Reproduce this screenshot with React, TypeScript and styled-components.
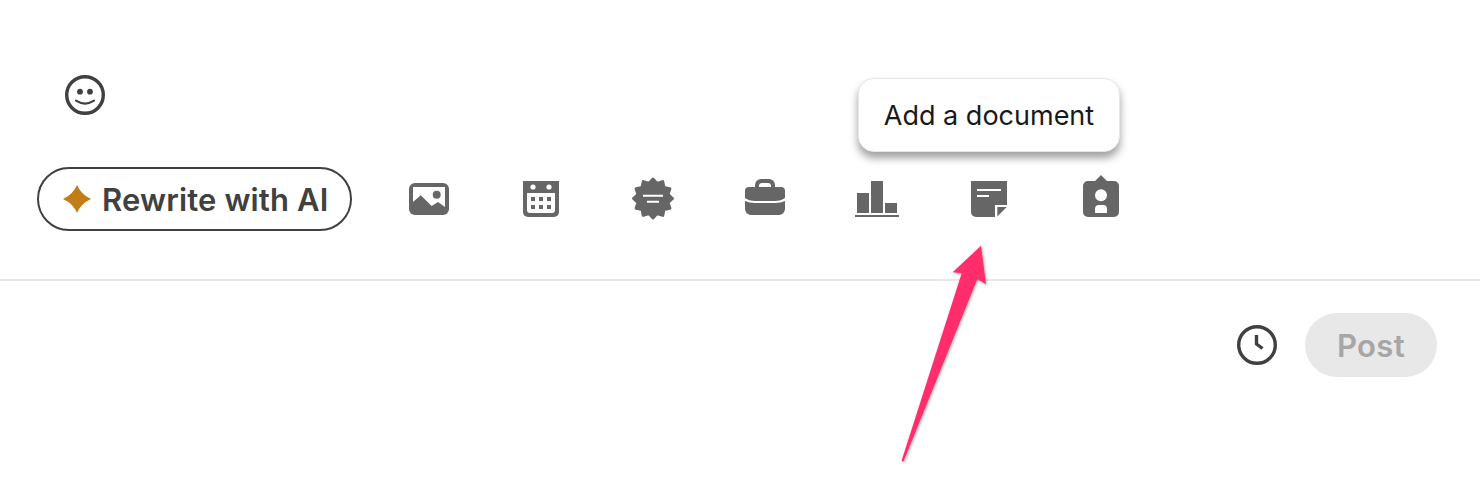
import React from 'react';
import styled, { createGlobalStyle } from 'styled-components';

const GlobalStyle = createGlobalStyle`
  html, body {
    margin: 0;
    background: #fff;
  }
  body {
    font-family: Inter, "Liberation Sans", sans-serif;
  }
`;

const Page = styled.div`
  position: relative;
  width: 1480px;
  height: 504px;
  padding-top: 75px;
  box-sizing: border-box;
  overflow: hidden;
`;

const EmojiRow = styled.div`
  display: flex;
  padding-left: 65px;
  color: #404040;
`;

const Toolbar = styled.div`
  display: flex;
  align-items: center;
  margin-top: 52px;
  padding-left: 37px;
`;

const RewriteButton = styled.button`
  display: flex;
  align-items: center;
  gap: 11px;
  width: 315px;
  height: 64px;
  margin-right: 21px;
  padding: 0 0 0 24px;
  box-sizing: border-box;
  border: 2px solid #404040;
  border-radius: 32px;
  background: #fff;
  color: #404040;
  font-family: inherit;
  font-size: 31px;
  font-weight: 600;
  letter-spacing: 0.15px;
  white-space: nowrap;
`;

const ToolSlot = styled.div`
  position: relative;
  display: flex;
  justify-content: center;
  align-items: center;
  width: 112px;
  height: 64px;
`;

const ToolIcon = styled.svg`
  display: block;
  width: 44px;
  height: 44px;
  overflow: visible;
  color: #666;
`;

const Tooltip = styled.div`
  position: absolute;
  left: 50%;
  bottom: 79px;
  transform: translateX(-50%);
  width: 262px;
  height: 74px;
  box-sizing: border-box;
  display: flex;
  justify-content: center;
  align-items: center;
  border: 1.5px solid #e8e8e8;
  border-radius: 16px;
  background: #fff;
  box-shadow: 0 6px 9px rgba(0, 0, 0, 0.38);
  color: #191919;
  font-size: 27px;
  white-space: nowrap;
`;

const Divider = styled.div`
  height: 2px;
  margin-top: 48px;
  background: #e8e8e8;
`;

const Footer = styled.div`
  display: flex;
  justify-content: flex-end;
  align-items: center;
  gap: 28px;
  margin-top: 32px;
  padding-right: 43px;
  color: #404040;
`;

const PostButton = styled.button`
  width: 132px;
  height: 64px;
  padding: 0;
  border: none;
  border-radius: 32px;
  background: #e8e8e8;
  color: #a6a6a6;
  font-family: inherit;
  font-size: 31px;
  font-weight: 600;
  letter-spacing: 0.4px;
`;

const Arrow = styled.svg`
  position: absolute;
  left: 890px;
  top: 230px;
  width: 110px;
  height: 240px;
  overflow: visible;
  filter: drop-shadow(1px 1px 1.5px rgba(0, 0, 0, 0.35));
`;

const badgePoints = Array.from({ length: 24 }, (_, i) => {
  const angle = (i * Math.PI) / 12 - Math.PI / 2;
  const radius = i % 2 === 0 ? 19.5 : 15.5;
  return `${(22 + radius * Math.cos(angle)).toFixed(2)},${(21.5 + radius * Math.sin(angle)).toFixed(2)}`;
}).join(' ');

const SmileIcon = () => (
  <svg width="40" height="40" viewBox="0 0 40 40" fill="none" stroke="currentColor">
    <circle cx="20" cy="20" r="18.3" strokeWidth="3.4" />
    <circle cx="15" cy="16.7" r="2.9" fill="currentColor" stroke="none" />
    <circle cx="25" cy="16.7" r="2.9" fill="currentColor" stroke="none" />
    <path d="M11 25.7Q20 31.5 29 25.7" strokeWidth="2.2" strokeLinecap="round" />
  </svg>
);

const ClockIcon = () => (
  <svg width="40" height="40" viewBox="0 0 40 40" fill="none" stroke="currentColor">
    <circle cx="20" cy="20" r="18.3" strokeWidth="3.4" />
    <path d="M19.5 10V19L25.5 23.5" strokeWidth="3.4" />
  </svg>
);

const SparkIcon = () => (
  <svg width="28" height="28" viewBox="0 0 28 28" fill="#c37d16">
    <path d="M14 0Q18 9.5 28 14Q18 18.5 14 28Q10 18.5 0 14Q10 9.5 14 0Z" />
  </svg>
);

const ImageIcon = () => (
  <ToolIcon viewBox="0 0 44 44">
    <rect x="2" y="6" width="40" height="32" rx="6" fill="currentColor" />
    <path d="M6 10H38V30L31 25L24.7 29L13.7 18.3L6 25Z" fill="#fff" />
    <circle cx="29.7" cy="17.7" r="4" fill="currentColor" />
  </ToolIcon>
);

const CalendarIcon = () => (
  <ToolIcon viewBox="0 0 44 44">
    <path d="M4 4H40V35a5 5 0 0 1-5 5H9a5 5 0 0 1-5-5Z" fill="currentColor" />
    <path d="M8 16H36V33a3 3 0 0 1-3 3H11a3 3 0 0 1-3-3Z" fill="#fff" />
    <circle cx="14" cy="10" r="2.6" fill="#fff" />
    <circle cx="30" cy="10" r="2.6" fill="#fff" />
    <path
      d="M12 20h4v4h-4ZM20 20h4v4h-4ZM28 20h4v4h-4ZM12 28h4v4h-4ZM20 28h4v4h-4ZM28 28h4v4h-4Z"
      fill="currentColor"
    />
  </ToolIcon>
);

const BadgeIcon = () => (
  <ToolIcon viewBox="0 0 44 44">
    <polygon
      points={badgePoints}
      fill="currentColor"
      stroke="currentColor"
      strokeWidth="3"
      strokeLinejoin="round"
    />
    <path d="M12 17.7H32V19.7H12ZM16 23.7H28V25.7H16Z" fill="#fff" />
  </ToolIcon>
);

const BriefcaseIcon = () => (
  <ToolIcon viewBox="0 0 44 44">
    <path
      d="M12 10V8a6 6 0 0 1 6-6h8a6 6 0 0 1 6 6v2H28V9a3 3 0 0 0-3-3H19a3 3 0 0 0-3 3v1Z"
      fill="currentColor"
    />
    <path d="M6 10H38a4 4 0 0 1 4 4V21Q38 24 32 24H12Q6 24 2 21V14a4 4 0 0 1 4-4Z" fill="currentColor" />
    <path d="M2 24Q6 26 12 26H32Q38 26 42 24V32a6 6 0 0 1-6 6H8a6 6 0 0 1-6-6Z" fill="currentColor" />
  </ToolIcon>
);

const ChartIcon = () => (
  <ToolIcon viewBox="0 0 44 44">
    <path d="M2 16H14V36H2ZM16 4H28V36H16ZM30 26H42V36H30ZM0 38H44V40H0Z" fill="currentColor" />
  </ToolIcon>
);

const DocumentIcon = () => (
  <ToolIcon viewBox="0 0 44 44">
    <path d="M4 4H40V28H28V40H9a5 5 0 0 1-5-5Z" fill="currentColor" />
    <path d="M30.3 30H39.7L30.3 39.4Z" fill="currentColor" />
    <path d="M10 12H34V14H10ZM10 18H22V20H10Z" fill="#fff" />
  </ToolIcon>
);

const ProfileIcon = () => (
  <ToolIcon viewBox="0 0 44 44">
    <path
      d="M16 4L22-2L28 4H35a5 5 0 0 1 5 5V35a5 5 0 0 1-5 5H9a5 5 0 0 1-5-5V9a5 5 0 0 1 5-5Z"
      fill="currentColor"
    />
    <circle cx="22" cy="18.3" r="6" fill="#fff" />
    <path d="M16 36V32a4 4 0 0 1 4-4h4a4 4 0 0 1 4 4v4Z" fill="#fff" />
  </ToolIcon>
);

const App = () => {
  return (
    <Page>
      <GlobalStyle />
      <EmojiRow>
        <SmileIcon />
      </EmojiRow>
      <Toolbar>
        <RewriteButton>
          <SparkIcon />
          Rewrite with AI
        </RewriteButton>
        <ToolSlot>
          <ImageIcon />
        </ToolSlot>
        <ToolSlot>
          <CalendarIcon />
        </ToolSlot>
        <ToolSlot>
          <BadgeIcon />
        </ToolSlot>
        <ToolSlot>
          <BriefcaseIcon />
        </ToolSlot>
        <ToolSlot>
          <ChartIcon />
        </ToolSlot>
        <ToolSlot>
          <Tooltip>Add a document</Tooltip>
          <DocumentIcon />
        </ToolSlot>
        <ToolSlot>
          <ProfileIcon />
        </ToolSlot>
      </Toolbar>
      <Divider />
      <Footer>
        <ClockIcon />
        <PostButton>Post</PostButton>
      </Footer>
      <Arrow viewBox="0 0 110 240">
        <path
          d="M91 15.7L96 54.3L87.3 49L13.5 231.5L11.5 231L71.7 43.3L62.7 42.3Z"
          fill="#ff2d6b"
        />
      </Arrow>
    </Page>
  );
};

export default App;
